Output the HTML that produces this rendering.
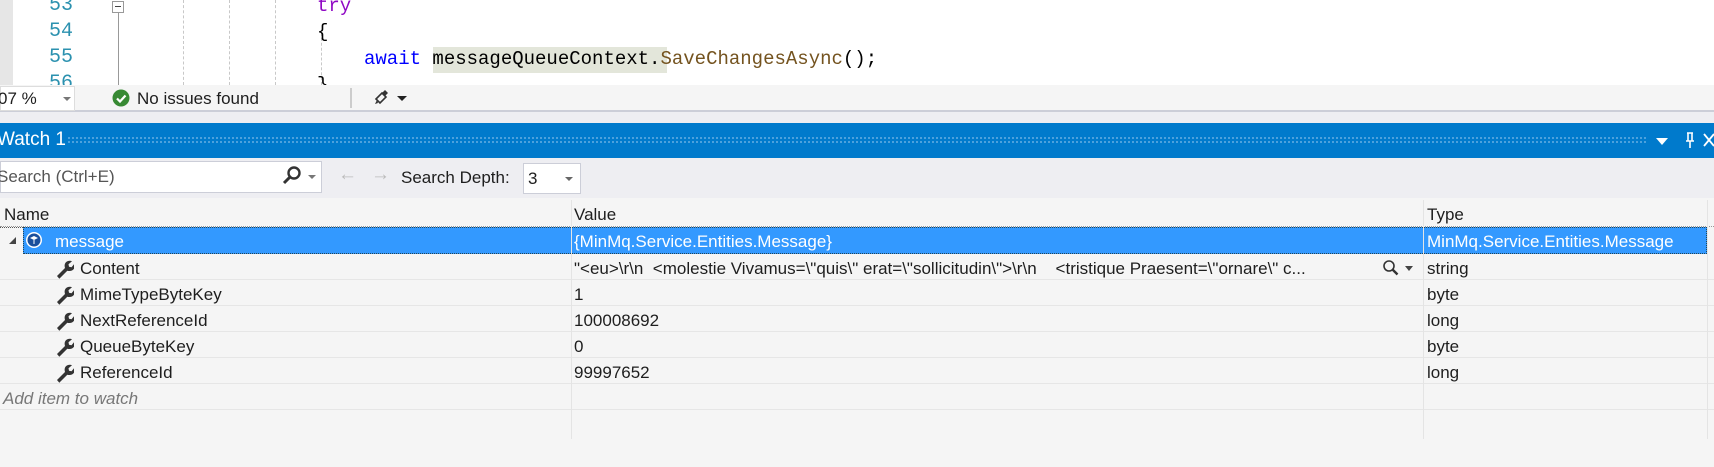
<!DOCTYPE html>
<html><head><meta charset="utf-8"><style>
*{margin:0;padding:0;box-sizing:border-box}
body{width:1714px;height:467px;overflow:hidden;background:#f5f5f5;font-family:"Liberation Sans",sans-serif;position:relative}
.a{position:absolute;white-space:nowrap}
.code{font-family:"Liberation Mono",monospace;font-size:19px;color:#000}
.ln{color:#2b91af;font-family:"Liberation Mono",monospace;font-size:20px;width:42px;text-align:right}
.dash{position:absolute;top:0;height:85px;border-left:1px dashed #c8c8c8}
.ui{font-size:17px;color:#1e1e1e}
.row{position:absolute;left:0;width:1714px;height:26px;border-bottom:1px solid #e6e6e6}
.row span{position:absolute;top:5px;font-size:17px;color:#1e1e1e;white-space:nowrap}
.sep{position:absolute;top:200px;width:1px;height:239px;background:#e4e4e4}
</style></head><body>
<div class="a" style="left:0;top:0;width:1714px;height:85px;background:#fff"></div>
<div class="a" style="left:0;top:0;width:13px;height:85px;background:#e6e6e6"></div>
<div class="a ln" style="left:31px;top:-6px">53</div>
<div class="a ln" style="left:31px;top:20px">54</div>
<div class="a ln" style="left:31px;top:46px">55</div>
<div class="a ln" style="left:31px;top:72px">56</div>
<div class="a" style="left:112px;top:1px;width:12px;height:12px;border:1px solid #999;background:#fff"></div>
<div class="a" style="left:115px;top:6px;width:6px;height:1px;background:#444"></div>
<div class="a" style="left:118px;top:13px;width:1px;height:72px;background:#999"></div>
<div class="dash" style="left:183px"></div>
<div class="dash" style="left:229px"></div>
<div class="dash" style="left:275px"></div>
<div class="dash" style="left:321px;top:33px;height:52px"></div>
<div class="a code" style="left:317px;top:-5px;color:#8f08c4">try</div>
<div class="a code" style="left:317px;top:21px">{</div>
<div class="a" style="left:433px;top:47px;width:234px;height:26px;background:#e3e6da"></div>
<div class="a code" style="left:364px;top:48px"><span style="color:#0000ff">await</span> messageQueueContext.<span style="color:#74531f">SaveChangesAsync</span>();</div>
<div class="a code" style="left:317px;top:74px">}</div>
<div class="a" style="left:0;top:85px;width:1714px;height:27px;background:#f5f5f5;border-bottom:2px solid #ccced8"></div>
<div class="a" style="left:0;top:86px;width:75px;height:25px;background:#fff;border:1px solid #ddd"></div>
<div class="a ui" style="left:-2px;top:89px">07 %</div>
<div class="a" style="left:63px;top:97px;border-left:4px solid transparent;border-right:4px solid transparent;border-top:4px solid #777"></div>
<svg class="a" style="left:112px;top:89px" width="18" height="18"><circle cx="9" cy="9" r="8.5" fill="#388a34"/><path d="M5 9.5l3 3 5.5-6" stroke="#fff" stroke-width="2.2" fill="none"/></svg>
<div class="a ui" style="left:137px;top:89px">No issues found</div>
<div class="a" style="left:350px;top:88px;width:2px;height:20px;background:#ccc"></div>
<svg class="a" style="left:373px;top:89px" width="16" height="18"><path d="M3 10l6-6 4 4-6 6z" fill="none" stroke="#333" stroke-width="1.6"/><path d="M9 4l3-3 3 3-3 3" fill="#333"/><path d="M4 11l-2 4 3-1z" fill="#333"/></svg>
<div class="a" style="left:397px;top:96px;border-left:5px solid transparent;border-right:5px solid transparent;border-top:5px solid #222"></div>
<div class="a" style="left:0;top:112px;width:1714px;height:11px;background:#eeeef2"></div>
<div class="a" style="left:0;top:123px;width:1714px;height:35px;background:#007acc"></div>
<div class="a" style="left:-3px;top:129px;font-size:19px;color:#fff">Watch 1</div>
<div class="a" style="left:67px;top:136px;width:1580px;height:8px;background-image:radial-gradient(circle,#5aa8e0 1px,transparent 1.1px);background-size:4px 4px"></div>
<div class="a" style="left:1656px;top:138px;border-left:6px solid transparent;border-right:6px solid transparent;border-top:7px solid #fff"></div>
<svg class="a" style="left:1684px;top:131px" width="12" height="18"><path d="M3 2h6M4 2v8M8 2v8M2 10h8M6 10v7" stroke="#fff" stroke-width="1.6" fill="none"/></svg>
<svg class="a" style="left:1703px;top:133px" width="12" height="14"><path d="M1 1l10 12M11 1L1 13" stroke="#fff" stroke-width="1.8"/></svg>
<div class="a" style="left:0;top:158px;width:1714px;height:40px;background:#eeeef2"></div>
<div class="a" style="left:0;top:161px;width:322px;height:32px;background:#fff;border:1px solid #ccced8"></div>
<div class="a" style="left:-3px;top:167px;font-size:17px;color:#555">Search (Ctrl+E)</div>
<svg class="a" style="left:281px;top:165px" width="22" height="22"><circle cx="13" cy="8" r="5.5" fill="none" stroke="#333" stroke-width="2.4"/><path d="M9 12l-6 6" stroke="#333" stroke-width="3"/></svg>
<div class="a" style="left:308px;top:175px;border-left:4px solid transparent;border-right:4px solid transparent;border-top:4px solid #777"></div>
<div class="a" style="left:338px;top:164px;font-size:19px;color:#bbb">&#8592;</div>
<div class="a" style="left:371px;top:164px;font-size:19px;color:#bbb">&#8594;</div>
<div class="a ui" style="left:401px;top:168px">Search Depth:</div>
<div class="a" style="left:523px;top:163px;width:58px;height:31px;background:#fff;border:1px solid #ccced8"></div>
<div class="a ui" style="left:528px;top:169px">3</div>
<div class="a" style="left:565px;top:177px;border-left:4px solid transparent;border-right:4px solid transparent;border-top:4px solid #666"></div>
<div class="row" style="top:200px;height:27px;border-bottom:1px dotted #999"><span style="left:4px">Name</span><span style="left:574px">Value</span><span style="left:1427px">Type</span></div>
<div class="a" style="left:0;top:227px;width:23px;height:27px;border-top:1px dotted #555"></div>
<div class="a" style="left:23px;top:227px;width:1684px;height:27px;background:#3399ff;border:1px dotted #245"></div>
<div class="a" style="left:9px;top:237px;border-left:7px solid transparent;border-bottom:7px solid #444"></div>
<svg class="a" style="left:25px;top:231px" width="18" height="18"><circle cx="9" cy="9" r="8" fill="#fff"/><circle cx="9" cy="9" r="6.5" fill="#1a4f9c"/><path d="M5 7l4-2 4 2-4 2z" fill="#fff"/><path d="M9 9v4" stroke="#fff"/></svg>
<div class="a" style="left:55px;top:232px;font-size:17px;color:#fff">message</div>
<div class="a" style="left:574px;top:232px;font-size:17px;color:#fff">{MinMq.Service.Entities.Message}</div>
<div class="a" style="left:1427px;top:232px;font-size:17px;color:#fff">MinMq.Service.Entities.Message</div>
<div class="a" style="left:1423px;top:227px;width:1px;height:27px;background:#e8e8e8"></div>
<div class="row" style="top:254px"><span style="left:80px">Content</span><span style="left:574px;font-size:17px">"&lt;eu&gt;\r\n&nbsp; &lt;molestie Vivamus=\"quis\" erat=\"sollicitudin\"&gt;\r\n&nbsp;&nbsp;&nbsp; &lt;tristique Praesent=\"ornare\" c...</span><span style="left:1427px">string</span></div>
<svg class="a" style="left:1382px;top:259px" width="18" height="18"><circle cx="7" cy="7" r="5" fill="none" stroke="#333" stroke-width="1.6"/><path d="M10.5 10.5l5 5" stroke="#333" stroke-width="2.4"/></svg>
<div class="a" style="left:1405px;top:266px;border-left:4px solid transparent;border-right:4px solid transparent;border-top:5px solid #444"></div>
<div class="row" style="top:280px"><span style="left:80px">MimeTypeByteKey</span><span style="left:574px">1</span><span style="left:1427px">byte</span></div>
<div class="row" style="top:306px"><span style="left:80px">NextReferenceId</span><span style="left:574px">100008692</span><span style="left:1427px">long</span></div>
<div class="row" style="top:332px"><span style="left:80px">QueueByteKey</span><span style="left:574px">0</span><span style="left:1427px">byte</span></div>
<div class="row" style="top:358px"><span style="left:80px">ReferenceId</span><span style="left:574px">99997652</span><span style="left:1427px">long</span></div>
<div class="row" style="top:384px"><span style="left:3px;font-style:italic;color:#777">Add item to watch</span></div>
<svg class="a" style="left:54px;top:257px" width="20" height="130">
<g fill="#333"><path id="w" d="M3 19l8-8c-1-3 0-6 3-7 1.5-.5 3-.3 4 .2l-3.5 3 .5 2.5 2.5.5 3-3.5c.6 1.2.6 3-.2 4.5-1.4 2.6-4.3 3.3-7 2.5l-8 8z"/>
<use href="#w" y="26"/><use href="#w" y="52"/><use href="#w" y="78"/><use href="#w" y="104"/></g></svg>
<div class="sep" style="left:571px"></div>
<div class="sep" style="left:1423px"></div>
<div class="sep" style="left:1707px"></div>
</body></html>
